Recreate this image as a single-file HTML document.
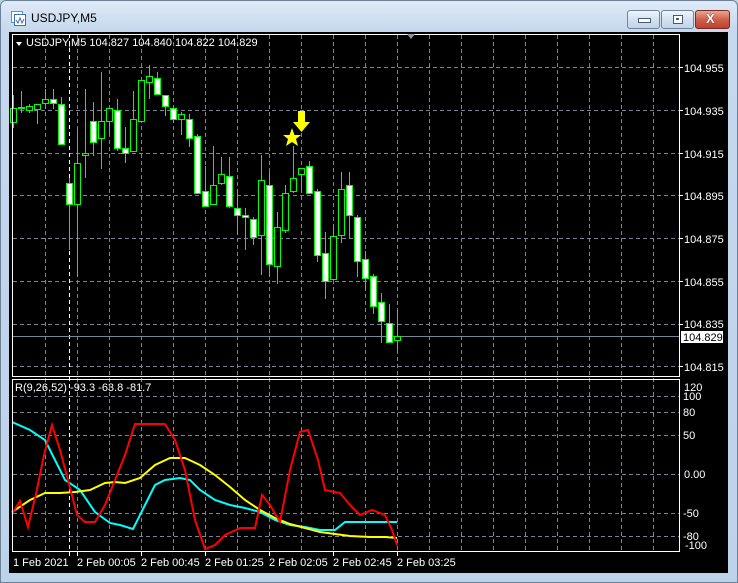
<!DOCTYPE html>
<html><head><meta charset="utf-8"><style>
html,body{margin:0;padding:0;width:738px;height:583px;overflow:hidden;background:#bcd3ea;font-family:"Liberation Sans",sans-serif}
#win{position:absolute;left:0;top:0;width:736px;height:581px;border:1px solid #6d8299;border-radius:6px 6px 0 0;background:linear-gradient(#dfeaf6,#c5d8ee 30px,#bdd3ea)}
#title{position:absolute;left:30px;top:10px;font-size:12px;color:#000}
.btn{position:absolute;top:9px;height:17px;border:1px solid #6f85a0;border-radius:3px;background:linear-gradient(#eef4fb,#d3e1f0 50%,#c2d4ea)}
#chart{position:absolute;left:9px;top:32px;width:719px;height:541px;background:#000}
</style></head><body>
<div id="win">
<svg style="position:absolute;left:9px;top:9px" width="16" height="16"><rect x="1.5" y="1.5" width="11" height="11" fill="#fff" stroke="#6a8fc0"/><rect x="4.5" y="4.5" width="11" height="11" fill="#fff" stroke="#3d72b8"/><path d="M6 10 L8 13 L10 8 L12 13 L14 9" stroke="#3d72b8" fill="none"/></svg>
<div id="title">USDJPY,M5</div>
<div class="btn" style="left:626px;width:31px"><div style="position:absolute;left:10px;top:7px;width:11px;height:3px;background:#fff;border:1px solid #4a5a70"></div></div>
<div class="btn" style="left:660px;width:31px"><div style="position:absolute;left:11px;top:4px;width:8px;height:7px;border:1px solid #4a5a70;background:#fff"></div><div style="position:absolute;left:14px;top:7px;width:3px;height:2px;background:#4a5a70"></div></div>
<div class="btn" style="left:694px;width:33px;border-color:#7a2a20;background:linear-gradient(#e8a593,#d0604a 50%,#c0402c)"><div style="position:absolute;left:10px;top:0px;color:#fff;font-weight:bold;font-size:13px;text-shadow:0 0 1px #000">X</div></div>
</div>
<div id="chart"></div>
<svg id="s" style="position:absolute;left:0;top:0" width="738" height="583" font-family="Liberation Sans, sans-serif" font-size="11">
<g id="grid" stroke="#7a8494" stroke-dasharray="4,3" stroke-width="1"></g>
<line x1="69.5" y1="34" x2="69.5" y2="552" stroke="#fff" stroke-dasharray="4,3"/>
<line x1="12" y1="336.5" x2="680" y2="336.5" stroke="#778899"/>
<g id="candles"></g>
<polyline id="cy" fill="none" stroke="#00ffff" stroke-width="2" points="12,422 30,430 45,440 55,460 65,480 80,490 95,512 110,523 120,525 133,529 145,505 155,485 165,480 180,478 190,480 200,490 215,500 230,505 245,508 260,512 275,520 290,525 305,527 320,530 335,530 345,522 355,522 370,522 397,522"/>
<polyline fill="none" stroke="#ffff00" stroke-width="2" points="12,512 30,500 45,493 60,493 75,492 90,490 105,483 115,482 125,483 140,478 155,465 170,458 185,458 200,465 215,475 230,487 245,500 260,510 275,518 290,524 305,528 320,532 335,534 350,536 370,537 385,537 397,538"/>
<polyline fill="none" stroke="#ff0000" stroke-width="2" points="12,514 20,501 28,527 36,494 44,455 52,425 60,450 68,480 77,515 85,522 95,522 105,505 115,480 125,455 135,424 165,424 175,440 185,470 195,520 205,549 215,545 225,535 240,528 255,528 262,495 270,505 280,522 290,470 300,432 308,430 318,460 325,490 340,493 350,505 360,515 372,510 385,515 392,530 397,545"/>
<path d="M292 128 L294.5 135 L301 135 L296 139 L298 146 L292 142 L286 146 L288 139 L283 135 L289.5 135 Z" fill="#ffff00"/>
<path d="M298 111 H305 V122 H310 L301.5 132 L293 122 H298 Z" fill="#ffff00"/>
<rect x="12.5" y="34.5" width="667" height="342" fill="none" stroke="#fff"/>
<rect x="12.5" y="379.5" width="667" height="172" fill="none" stroke="#fff"/>
<path d="M407 34 L415 34 L411 39 Z" fill="#8a96a8"/>
<g fill="#fff">
<path d="M16 42 L22 42 L19 46 Z"/>
<text x="26" y="46">USDJPY,M5  104.827 104.840 104.822 104.829</text>
<text x="15" y="391">R(9,26,52) -93.3 -63.8 -81.7</text>
<text x="684" y="72">104.955</text><text x="684" y="115">104.935</text><text x="684" y="158">104.915</text><text x="684" y="200">104.895</text><text x="684" y="243">104.875</text><text x="684" y="286">104.855</text><text x="684" y="328">104.835</text><text x="684" y="371">104.815</text>
<text x="684" y="391">120</text><text x="683" y="400">100</text><text x="683" y="416">80</text><text x="683" y="439">50</text><text x="684" y="478">0.00</text><text x="683" y="517">-50</text><text x="683" y="540">-80</text><text x="685" y="549">-100</text>
<text x="13" y="566">1 Feb 2021</text><text x="77" y="566">2 Feb 00:05</text><text x="141" y="566">2 Feb 00:45</text><text x="205" y="566">2 Feb 01:25</text><text x="269" y="566">2 Feb 02:05</text><text x="333" y="566">2 Feb 02:45</text><text x="397" y="566">2 Feb 03:25</text>
</g>
<rect x="681" y="331" width="42" height="12" fill="#fff"/>
<text x="683" y="341" fill="#000">104.829</text>
</svg>
<script>
var g=document.getElementById('grid'),h='';
[67,110,153,195,238,281,324,366,396,412,435,474,513,536].forEach(function(y){h+='<line x1="13" y1="'+(y+.5)+'" x2="679" y2="'+(y+.5)+'"/>';});
for(var x=45;x<680;x+=32){h+='<line x1="'+(x+.5)+'" y1="35" x2="'+(x+.5)+'" y2="551"/>';}
g.innerHTML=h;
var t='';[69,77,141,205,269,333,397].forEach(function(x){t+='<line x1="'+(x+.5)+'" y1="552" x2="'+(x+.5)+'" y2="556" stroke="#fff"/>';});
[67,110,153,195,238,281,324,366].forEach(function(y){t+='<line x1="680" y1="'+(y+.5)+'" x2="683" y2="'+(y+.5)+'" stroke="#fff"/>';});
var c=[[108,122,95,128,0],[107,108,91,113,0],[106,110,104,113,0],[104,109,104,124,0],[99,103,89,109,0],[99,103,89,109,1],[104,144,97,144,1],[183,204,178,250,1],[163,204,130,277,0],[153,155,89,178,0],[121,142,102,156,1],[121,138,72,169,0],[108,121,108,135,0],[110,148,99,151,1],[148,153,127,163,1],[119,151,91,151,0],[80,121,80,121,0],[76,82,65,99,0],[78,94,72,95,1],[95,106,95,116,1],[108,119,106,123,1],[114,119,112,135,0],[119,138,114,147,1],[136,193,134,193,1],[191,206,166,206,1],[185,204,146,204,0],[174,183,157,185,0],[176,206,157,208,1],[208,215,190,234,1],[215,217,208,250,1],[219,237,217,245,1],[180,235,155,275,0],[185,264,172,277,1],[227,266,212,284,0],[193,230,185,233,0],[178,191,146,193,0],[168,174,168,193,0],[166,193,161,193,1],[191,255,189,262,1],[253,281,232,299,1],[236,279,226,279,0],[189,235,172,243,0],[185,215,172,239,1],[217,261,215,277,1],[259,278,251,290,1],[276,306,274,314,1],[302,321,293,343,1],[323,342,304,342,1],[336,340,310,350,0]];
c.forEach(function(d,i){var x=13+8*i;t+='<line x1="'+(x+.5)+'" y1="'+d[2]+'" x2="'+(x+.5)+'" y2="'+d[3]+'" stroke="#00ff00"/>';t+='<rect x="'+(x-2.5)+'" y="'+(d[0]+.5)+'" width="6" height="'+Math.max(1,d[1]-d[0])+'" fill="'+(d[4]?'#fff':'#000')+'" stroke="#00ff00"/>';});
document.getElementById('candles').innerHTML=t;
</script>
</body></html>
